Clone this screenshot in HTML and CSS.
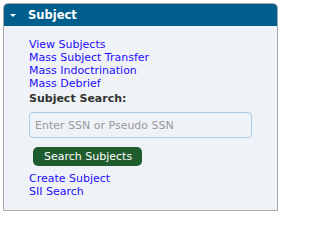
FILE: index.html
```html
<!DOCTYPE html>
<html>
<head>
<meta charset="utf-8">
<link rel="stylesheet" href="styles.css">
</head>
<body>
<div class="panel">
  <div class="panel-header">
    <span class="caret"></span>
    <span class="title">Subject</span>
  </div>
  <div class="panel-body">
    <ul class="links">
      <li><a href="#">View Subjects</a></li>
      <li><a href="#">Mass Subject Transfer</a></li>
      <li><a href="#">Mass Indoctrination</a></li>
      <li><a href="#">Mass Debrief</a></li>
    </ul>
    <div class="label">Subject Search:</div>
    <input class="search" type="text" placeholder="Enter SSN or Pseudo SSN">
    <button class="btn">Search Subjects</button>
    <ul class="links">
      <li><a href="#">Create Subject</a></li>
      <li><a href="#">SII Search</a></li>
    </ul>
  </div>
</div>
</body>
</html>
```
FILE: styles.css
```css
html, body {
  margin: 0;
  padding: 0;
  background: #fff;
}
body {
  font-family: "DejaVu Sans", Verdana, sans-serif;
  font-size: 11px;
  padding: 3px;
}
.panel {
  width: 273px;
  height: 206px;
  border: 1px solid #a9a9a9;
  border-radius: 5px 5px 0 0;
  background: #eff3f7;
  overflow: hidden;
  box-sizing: content-box;
}
.panel-header {
  height: 22px;
  background: #005e8c;
  display: flex;
  align-items: center;
  color: #fff;
}
.caret {
  width: 0;
  height: 0;
  border-left: 3px solid transparent;
  border-right: 3px solid transparent;
  border-top: 3px solid #fff;
  margin-left: 6px;
  margin-right: 12px;
}
.title {
  font-weight: bold;
  font-size: 11.5px;
}
.panel-body {
  padding: 12px 0 0 25px;
}
.links {
  list-style: none;
  margin: 0;
  padding: 0;
}
.links li {
  line-height: 13px;
}
.links a {
  color: #1f0dff;
  text-decoration: none;
}
.label {
  font-weight: bold;
  color: #333;
  line-height: 15px;
  margin-top: 1px;
}
.search {
  display: block;
  box-sizing: border-box;
  width: 223px;
  height: 26px;
  margin: 6px 0 0 0;
  border: 1px solid #a8cbea;
  border-radius: 4px;
  background: #eff3f7;
  padding: 0 5px;
  font-family: "DejaVu Sans", Verdana, sans-serif;
  font-size: 11px;
  color: #333;
}
.search::placeholder {
  color: #999;
}
.btn {
  display: block;
  margin: 9px 0 0 4px;
  height: 19px;
  padding: 0 10px 0 11px;
  border: none;
  border-radius: 5px;
  background: #1f5c2e;
  color: #fff;
  font-family: "DejaVu Sans", Verdana, sans-serif;
  font-size: 11px;
  line-height: 19px;
}
.btn + .links {
  margin-top: 6px;
}
```
